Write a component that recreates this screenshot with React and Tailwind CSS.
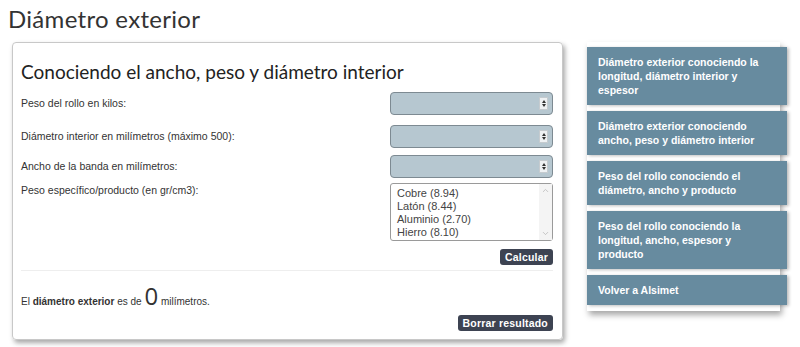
import { ChevronUp, ChevronDown } from 'lucide-react';

const links = [
  'Diámetro exterior conociendo la longitud, diámetro interior y espesor',
  'Diámetro exterior conociendo ancho, peso y diámetro interior',
  'Peso del rollo conociendo el diámetro, ancho y producto',
  'Peso del rollo conociendo la longitud, ancho, espesor y producto',
  'Volver a Alsimet',
];

const materiales = ['Cobre (8.94)', 'Latón (8.44)', 'Aluminio (2.70)', 'Hierro (8.10)'];

function NumberInput() {
  return (
    <div className="w-[163px] h-[23px] bg-[#b6c7d0] border border-[#7d8a92] rounded-[4px] flex items-center justify-end pr-[4px]">
      <div className="w-[9px] h-[13px] bg-[#eef1f3] border border-[#c5cbcf] flex flex-col items-center justify-center gap-[1px]">
        <span className="block w-0 h-0 border-l-[2.5px] border-r-[2.5px] border-b-[3px] border-l-transparent border-r-transparent border-b-[#333]"></span>
        <span className="block w-0 h-0 border-l-[2.5px] border-r-[2.5px] border-t-[3px] border-l-transparent border-r-transparent border-t-[#333]"></span>
      </div>
    </div>
  );
}

function Field({ label, children, className = '' }) {
  return (
    <div className={`flex justify-between ${className}`}>
      <label className="text-[10.5px] text-[#333]">{label}</label>
      {children}
    </div>
  );
}

export default function App() {
  return (
    <div className="w-[800px] h-[347px] bg-white overflow-hidden font-['Liberation_Sans',Arial,sans-serif] text-[#333]">
      <h1 className="pl-[8px] pt-[5px] h-[42px] text-[24px] leading-[28px] font-['Lato',sans-serif] text-[#333] tracking-[0.3px]">
        Diámetro exterior
      </h1>

      <div className="flex items-start">
        {/* formulario */}
        <div className="ml-[12px] w-[551px] h-[298px] border border-[#c8c8c8] rounded-[4px] shadow-[2px_3px_5px_rgba(0,0,0,0.35)] pl-[8px] pr-[9px]">
          <h2 className="pt-[17px] text-[19px] leading-[24px] font-['Lato',sans-serif] text-[#222]">
            Conociendo el ancho, peso y diámetro interior
          </h2>

          <Field label="Peso del rollo en kilos:" className="mt-[8px] items-center">
            <NumberInput />
          </Field>
          <Field label="Diámetro interior en milímetros (máximo 500):" className="mt-[10px] items-center">
            <NumberInput />
          </Field>
          <Field label="Ancho de la banda en milímetros:" className="mt-[7px] items-center">
            <NumberInput />
          </Field>
          <Field label="Peso específico/producto (en gr/cm3):" className="mt-[5px] items-start">
            <div className="w-[163px] h-[58px] bg-white border border-[#9a9a9a] rounded-[3px] flex">
              <div className="flex-1 pl-[6px] pt-[3px] text-[11px] leading-[13px] text-[#444]">
                {materiales.map((m) => (
                  <div key={m}>{m}</div>
                ))}
              </div>
              <div className="w-[13px] bg-[#f4f4f4] flex flex-col justify-between items-center py-[2px] text-[#b5b5b5]">
                <ChevronUp size={9} strokeWidth={2} />
                <ChevronDown size={9} strokeWidth={2} />
              </div>
            </div>
          </Field>

          <div className="flex justify-end mt-[8px]">
            <button className="h-[16px] px-[5px] bg-[#3d4352] text-white text-[10.5px] leading-[16px] font-bold rounded-[3px] tracking-[0.2px]">
              Calcular
            </button>
          </div>

          <div className="mt-[5px] border-t border-[#eeeeee]"></div>

          <p className="mt-[13px] text-[10px] text-[#333] flex items-baseline">
            El&nbsp;<b className="font-bold">diámetro exterior</b>&nbsp;es de&nbsp;
            <span className="text-[24px] leading-[24px] font-['Open_Sans',sans-serif]">0</span>
            &nbsp;milímetros.
          </p>

          <div className="flex justify-end mt-[6px]">
            <button className="h-[16px] px-[5px] bg-[#3d4352] text-white text-[10.5px] leading-[16px] font-bold rounded-[3px] tracking-[0.2px]">
              Borrar resultado
            </button>
          </div>
        </div>

        {/* menú lateral */}
        <div className="ml-[24px] w-[193px] bg-white pt-[5px] shadow-[2px_4px_6px_rgba(0,0,0,0.35)]">
          {links.map((l) => (
            <div key={l} className="w-[200px] mb-[6px] bg-[#678b9f] text-white font-bold text-[10.5px] leading-[14px] pl-[11px] pr-[10px] py-[8px] shadow-[2px_1px_3px_rgba(0,0,0,0.25)]">
              {l}
            </div>
          ))}
        </div>
      </div>
    </div>
  );
}
